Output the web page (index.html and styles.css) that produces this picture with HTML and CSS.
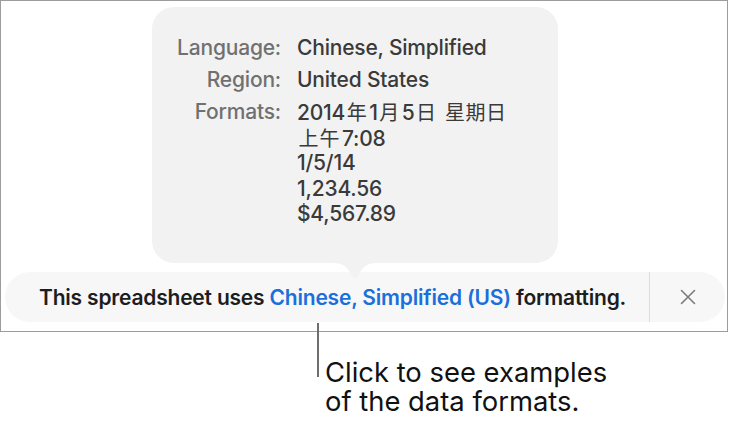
FILE: index.html
```html
<!DOCTYPE html>
<html>
<head>
<meta charset="utf-8">
<link rel="stylesheet" href="styles.css">
</head>
<body>
<div class="frame">
  <div class="popover">
    <div class="grid">
      <div class="label">Language:</div>
      <div class="value">Chinese, Simplified</div>
      <div class="label">Region:</div>
      <div class="value">United States</div>
      <div class="label">Formats:</div>
      <div class="value lines">
        <div>2014<span class="cjk">年</span>1<span class="cjk">月</span>5<span class="cjk">日</span> <span class="cjk wide">星期日</span></div>
        <div><span class="cjk">上午</span>7:08</div>
        <div>1/5/14</div>
        <div>1,234.56</div>
        <div>$4,567.89</div>
      </div>
    </div>
    <svg class="arrow" width="44" height="17" viewBox="0 0 44 17">
      <path d="M0 0 C9 0 13 3 17 9 L19.5 13.5 Q22 17 24.5 13.5 L27 9 C31 3 35 0 44 0 Z" fill="#f2f2f2"/>
    </svg>
  </div>
  <div class="bar">
    <div class="msg">This spreadsheet uses <span class="link">Chinese, Simplified (US)</span> formatting.</div>
    <div class="divider"></div>
    <div class="close">
      <svg width="16" height="16" viewBox="0 0 16 16"><path d="M1.5 1.5 L14.5 14.5 M14.5 1.5 L1.5 14.5" stroke="#7b7b7b" stroke-width="1.6" fill="none" stroke-linecap="round"/></svg>
    </div>
  </div>
  <div class="callout-line"></div>
</div>
<div class="note">
  <div class="note-line">Click to see examples</div>
  <div class="note-line">of the data formats.</div>
</div>
</body>
</html>
```
FILE: styles.css
```css
html, body {
  margin: 0;
  padding: 0;
  background: #ffffff;
}
body {
  width: 729px;
  height: 430px;
  overflow: hidden;
  font-family: Inter, "Noto Sans CJK SC", sans-serif;
}
.frame {
  position: relative;
  box-sizing: border-box;
  width: 728px;
  height: 332px;
  border: 1px solid #9c9c9c;
  padding-top: 6px;
}
.popover {
  position: relative;
  box-sizing: border-box;
  margin-left: 151px;
  width: 406px;
  height: 256px;
  background: #f2f2f2;
  border-radius: 22px;
  padding: 28px 0 0 0;
}
.grid {
  display: grid;
  grid-template-columns: 129px auto;
  column-gap: 16px;
  row-gap: 6px;
  font-size: 21px;
  font-weight: 500;
  line-height: 26px;
  letter-spacing: -0.2px;
}
.label {
  color: #707070;
  text-align: right;
}
.value {
  color: #3a3a3a;
}
.lines div {
  height: 25.5px;
  white-space: nowrap;
}
.cjk {
  font-family: "Noto Sans CJK SC", sans-serif;
  font-weight: 400;
  letter-spacing: 1px;
  font-size: 20px;
  margin: 0 1.5px;
}
.cjk.wide {
  letter-spacing: 0.5px;
  margin-left: 1px;
}
.arrow {
  position: absolute;
  left: 181px;
  top: 256px;
  display: block;
}
.bar {
  margin-top: 9px;
  margin-left: 4px;
  width: 720px;
  height: 50px;
  border-radius: 25px;
  background: #f7f7f7;
  display: flex;
  align-items: stretch;
}
.msg {
  flex: 1;
  display: flex;
  align-items: center;
  padding-left: 34px;
  font-size: 21px;
  font-weight: 600;
  color: #1d1d1f;
  letter-spacing: -0.2px;
  white-space: pre;
}
.link {
  color: #1b6fdb;
}
.divider {
  width: 1px;
  background: #dddddd;
}
.close {
  width: 75px;
  display: flex;
  align-items: center;
  justify-content: center;
}
.close svg {
  display: block;
}
.callout-line {
  position: absolute;
  left: 316px;
  top: 322px;
  width: 1.5px;
  height: 54px;
  background: #6e6e6e;
}
.note {
  margin-left: 325px;
  margin-top: 27px;
  font-size: 27.4px;
  color: #111111;
  font-weight: 400;
}
.note-line {
  height: 29px;
  line-height: 27px;
}
```
